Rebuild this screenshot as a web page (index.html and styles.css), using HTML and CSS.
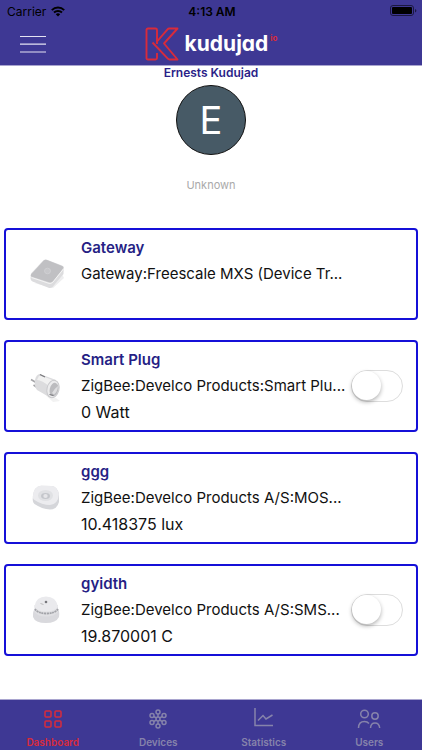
FILE: index.html
```html
<!DOCTYPE html>
<html lang="en">
<head>
<meta charset="utf-8">
<meta name="viewport" content="width=device-width, initial-scale=1">
<title>Kudujad Dashboard</title>
<link rel="stylesheet" href="styles.css">
</head>
<body>
<header class="header">
  <div class="status">
    <div class="carrier">
      <span>Carrier</span>
      <svg width="14" height="11" viewBox="0 0 14 11" fill="none" stroke="#000" stroke-width="2"><path d="M.8 4.1a9 9 0 0 1 12.4 0M3 6.5a5.8 5.8 0 0 1 8 0"/><path d="M7 10.6 4.8 8.3a3.2 3.2 0 0 1 4.4 0z" fill="#000" stroke="none"/></svg>
    </div>
    <time class="clock">4:13 AM</time>
    <div class="battery">
      <svg width="27" height="12" viewBox="0 0 27 12"><rect x=".5" y=".5" width="23" height="10" rx="2.5" fill="none" stroke="#1b1840"/><rect x="2" y="2" width="20" height="7" rx="1" fill="#000"/><path d="M25 4v3.5q1.4-.4 1.4-1.75T25 4z" fill="#1b1840"/></svg>
    </div>
  </div>
  <div class="nav">
    <button class="menu" type="button" aria-label="Menu">
      <svg width="26" height="18" viewBox="0 0 26 18" stroke="#e4e2f2" stroke-width="1.2"><path d="M0 1.5h26M0 9.2h26M0 17h26"/></svg>
    </button>
    <a class="brand" href="#">
      <svg width="34" height="34" viewBox="0 0 34 34" fill="none" stroke="#d92b3b" stroke-width="1.9" stroke-linejoin="round"><path d="M12 26V31q0 1.500-1.500 1.500H3q-1.500 0-1.500-1.500V3Q1.500 1.500 3 1.500H10.500Q12 1.500 12 3V17"/><path d="M12 14.500 22.500 2.300Q23.200 1.500 24.200 1.500H32.500L19 16.500 32.500 32.500H24.500Q23.500 32.500 22.800 31.700L7.500 15.500"/></svg>
      <span class="brand-name">kudujad</span><sup class="brand-tld">io</sup>
    </a>
  </div>
</header>

<main class="content">
  <section class="profile">
    <h1 class="user-name">Ernests Kudujad</h1>
    <div class="avatar">E</div>
    <p class="place">Unknown</p>
  </section>

  <section class="devices">
    <article class="card">
      <svg class="photo" width="42" height="40" viewBox="0 0 42 40"><path d="M8 29 27 34 38 24 36 20 26 30z" fill="#eeeeef"/><path d="M5 19.500 17.500 6.300Q19 5 21 5.700L36 11.500Q38 12.200 37.700 14L37.500 20 26.500 33Q25 34.500 22.500 33.800L6.500 27.500Q4.500 26.500 4.500 24.500z" fill="#dcdcde"/><path d="M5 20.500 17.800 6.500Q19 5.400 21 6L36 12Q38.300 12.800 37 14.500L27 27.500Q25.500 29 23 28.300L6.500 23Q4 22 5 20.500z" fill="#c0c0c3"/><path d="M5.500 23.500 23 29.400Q25 30 27 28L37.500 15" fill="none" stroke="#f4f4f4"/><ellipse cx="21.500" cy="17" rx="3" ry="2.800" fill="#c7c7ca" stroke="#d3d3d6" stroke-width=".7"/></svg>
      <div class="info">
        <h2>Gateway</h2>
        <p>Gateway:Freescale MXS (Device Tr...</p>
      </div>
    </article>

    <article class="card">
      <svg class="photo" width="42" height="40" viewBox="0 0 42 40"><path d="M15 25 30 32 34 35 27 36z" fill="#f2f2f2"/><path d="M5 13.500 10 16.500M7.500 19 12 22" stroke="#a5a5a8" stroke-width="1.600"/><path d="M9 14Q10 8.500 14 8L30 14 25 32 11 24Q8 20 9 14z" fill="#dcdcde"/><path d="M13 10Q18 10 28 15L24 21Q16 14 11 14z" fill="#f1f1f1"/><ellipse cx="27" cy="23" rx="6" ry="8.800" transform="rotate(14 27 23)" fill="#ececed" stroke="#c9c9cc"/><ellipse cx="28" cy="23.500" rx="4.300" ry="6.800" transform="rotate(14 28 23.500)" fill="#bcbcbf"/><path d="M26 27q3-5 6-7-.5 6-4 8.500z" fill="#dedee0"/><path d="m14 8.500 5 2.500M23.500 28.500l4 1" stroke="#77777b" stroke-width="1.200"/></svg>
      <div class="info">
        <h2>Smart Plug</h2>
        <p>ZigBee:Develco Products:Smart Plu...</p>
        <p class="reading">0 Watt</p>
      </div>
      <input class="switch" type="checkbox" role="switch" aria-label="Smart Plug">
    </article>

    <article class="card">
      <svg class="photo" width="42" height="40" viewBox="0 0 42 40"><path d="M7 18Q8 8.500 15 7.800L26 8Q31 8.500 33 16V24Q31 31.500 24 31.500 16 31 8.500 26 6 24 7 18z" fill="#d5d6da"/><path d="M7 17Q8 8.500 15 7.800L26 8Q31 8.500 33 16 32 26.500 24 27 16 27 8.500 22 6 20 7 17z" fill="#ececef"/><ellipse cx="19.500" cy="17.500" rx="7.500" ry="5.500" fill="#e0e1e4"/><ellipse cx="19.500" cy="18" rx="4.500" ry="3" fill="#c4c6cb"/><ellipse cx="19.500" cy="18" rx="2.200" ry="1.900" fill="#e6e6e9"/></svg>
      <div class="info">
        <h2>ggg</h2>
        <p>ZigBee:Develco Products A/S:MOS...</p>
        <p class="reading">10.418375 lux</p>
      </div>
    </article>

    <article class="card">
      <svg class="photo" width="42" height="40" viewBox="0 0 42 40"><path d="M7 24Q7 20 10 18H31Q34 20 33 27 30 33 20 33 9 33 7 27z" fill="#d9d9dd"/><path d="M8.500 15V22Q12 26.500 20 26.500T32 22V15z" fill="#e0e0e3"/><path d="M9 19Q12 23.500 20.500 23.500T32 19" fill="none" stroke="#a3a4a9" stroke-width="1.800" stroke-dasharray="2 .6"/><path d="M8.500 16.500Q10 6.500 20 6.500T32 16.500Q29 21.500 20 21.500T8.500 16.500z" fill="#eaeaed"/><path d="m14.500 13.500 3 1" stroke="#bbb"/><circle cx="20" cy="12" r="1.300" fill="#77777c"/></svg>
      <div class="info">
        <h2>gyidth</h2>
        <p>ZigBee:Develco Products A/S:SMS...</p>
        <p class="reading">19.870001 C</p>
      </div>
      <input class="switch" type="checkbox" role="switch" aria-label="gyidth">
    </article>
  </section>
</main>

<nav class="tabs">
  <a class="tab active" href="#">
    <svg width="24" height="24" viewBox="0 0 24 24"><rect x="4" y="4" width="6" height="6" rx="1"/><rect x="14" y="4" width="6" height="6" rx="1"/><rect x="4" y="14" width="6" height="6" rx="1"/><rect x="14" y="14" width="6" height="6" rx="1"/></svg>
    <span>Dashboard</span>
  </a>
  <a class="tab" href="#">
    <svg width="24" height="24" viewBox="0 0 24 24"><circle cx="12" cy="12" r="2"/><circle cx="12" cy="5" r="2"/><circle cx="12" cy="19" r="2"/><circle cx="6" cy="8.500" r="2"/><circle cx="18" cy="8.500" r="2"/><circle cx="6" cy="15.500" r="2"/><circle cx="18" cy="15.500" r="2"/><path d="M12 7V10M12 14v3M7.800 9.500l2.400 1.400M16.200 9.500l-2.400 1.400M7.800 14.500l2.400-1.400M16.200 14.500l-2.400-1.400"/></svg>
    <span>Devices</span>
  </a>
  <a class="tab" href="#">
    <svg width="24" height="24" viewBox="0 0 24 24"><path d="M3 1V18.500H21M6 13.500l5-5 3 3.500 6.500-4"/></svg>
    <span>Statistics</span>
  </a>
  <a class="tab" href="#">
    <svg width="24" height="24" viewBox="0 0 24 24"><circle cx="7.500" cy="7" r="3.800"/><circle cx="18" cy="9" r="3.200"/><path d="M1.500 21Q1.500 14.500 7.500 14.500 10.300 14.500 12 16.500M13.500 21Q13.800 16 18 16T22.700 21"/></svg>
    <span>Users</span>
  </a>
</nav>
</body>
</html>
```
FILE: styles.css
```css
* {
  box-sizing: border-box;
  margin: 0;
}

body {
  display: flex;
  flex-direction: column;
  min-height: 100vh;
  background: #fff;
  color: #111;
  font-family: Inter, "Liberation Sans", sans-serif;
}

a {
  color: inherit;
  text-decoration: none;
}

.header {
  background: #3e3894;
  border-bottom: 1px solid #a9a5cf;
}

.status {
  display: grid;
  grid-template-columns: 1fr auto 1fr;
  align-items: center;
  height: 22px;
  padding: 0 5px 0 7px;
  color: #000;
  font-size: 12px;
}

.carrier {
  display: flex;
  align-items: center;
  gap: 5px;
}

.clock {
  font-weight: 600;
}

.battery {
  display: flex;
  justify-content: flex-end;
}

.nav {
  display: grid;
  grid-template-columns: 1fr auto 1fr;
  align-items: center;
  height: 43px;
  padding: 0 20px;
}

.menu {
  display: flex;
  justify-self: start;
  padding: 0;
  border: 0;
  background: none;
}

.brand {
  display: flex;
  align-items: center;
  color: #fff;
}

.brand-name {
  margin-left: 6px;
  font-size: 21px;
  line-height: 24px;
  font-weight: 700;
  font-feature-settings: "cv11", "ss03";
}

.brand-tld {
  align-self: flex-start;
  margin: 7px 0 0 2px;
  color: #d92b3b;
  font-size: 8px;
  line-height: 8px;
  font-weight: 700;
}

.profile {
  display: flex;
  flex-direction: column;
  align-items: center;
}

.user-name {
  color: #2a1f88;
  font-size: 12px;
  line-height: 14px;
  font-weight: 600;
}

.avatar {
  display: grid;
  place-items: center;
  width: 70px;
  height: 70px;
  margin: 5px 0 22px;
  border: 1px solid #111;
  border-radius: 50%;
  background: #475a66;
  color: #fff;
  font-size: 38px;
}

.place {
  color: #aaa;
  font-size: 11px;
  line-height: 16px;
}

.devices {
  display: grid;
  gap: 20px;
  padding: 35px 4px 20px;
}

.card {
  display: grid;
  grid-template-columns: 75px 1fr auto;
  align-items: center;
  min-height: 92px;
  padding: 5px 13px 5px 0;
  border: 2px solid #1510d8;
  border-radius: 4px;
}

.photo {
  margin-left: 20px;
}

.info {
  align-self: start;
  min-width: 0;
  font-size: 15px;
  line-height: 26px;
  white-space: nowrap;
}

.info h2 {
  color: #261f85;
  font-size: 15px;
  font-weight: 600;
}

.info .reading {
  font-size: 16px;
}

.switch {
  display: flex;
  appearance: none;
  width: 52px;
  height: 32px;
  margin: 0;
  border: 1px solid #ddd;
  border-radius: 16px;
  background: #fff;
}

.switch::before {
  content: "";
  width: 29px;
  height: 29px;
  border-radius: 50%;
  background: #fff;
  box-shadow: 0 2px 4px rgba(0, 0, 0, 0.3);
}

.switch:checked {
  justify-content: flex-end;
  background: #4cd964;
}

.tabs {
  display: grid;
  grid-template-columns: repeat(4, 1fr);
  margin-top: auto;
  padding: 7px 0 1px;
  border-top: 1px solid #a9a5cf;
  background: #3e3894;
}

.tab {
  display: flex;
  flex-direction: column;
  align-items: center;
  color: #8683ab;
  font-size: 10px;
  line-height: 14px;
  font-weight: 600;
}

.tab svg {
  margin-bottom: 4px;
  fill: none;
  stroke: currentColor;
  stroke-width: 1.5;
}

.tab.active {
  color: #d92b3b;
}
```
